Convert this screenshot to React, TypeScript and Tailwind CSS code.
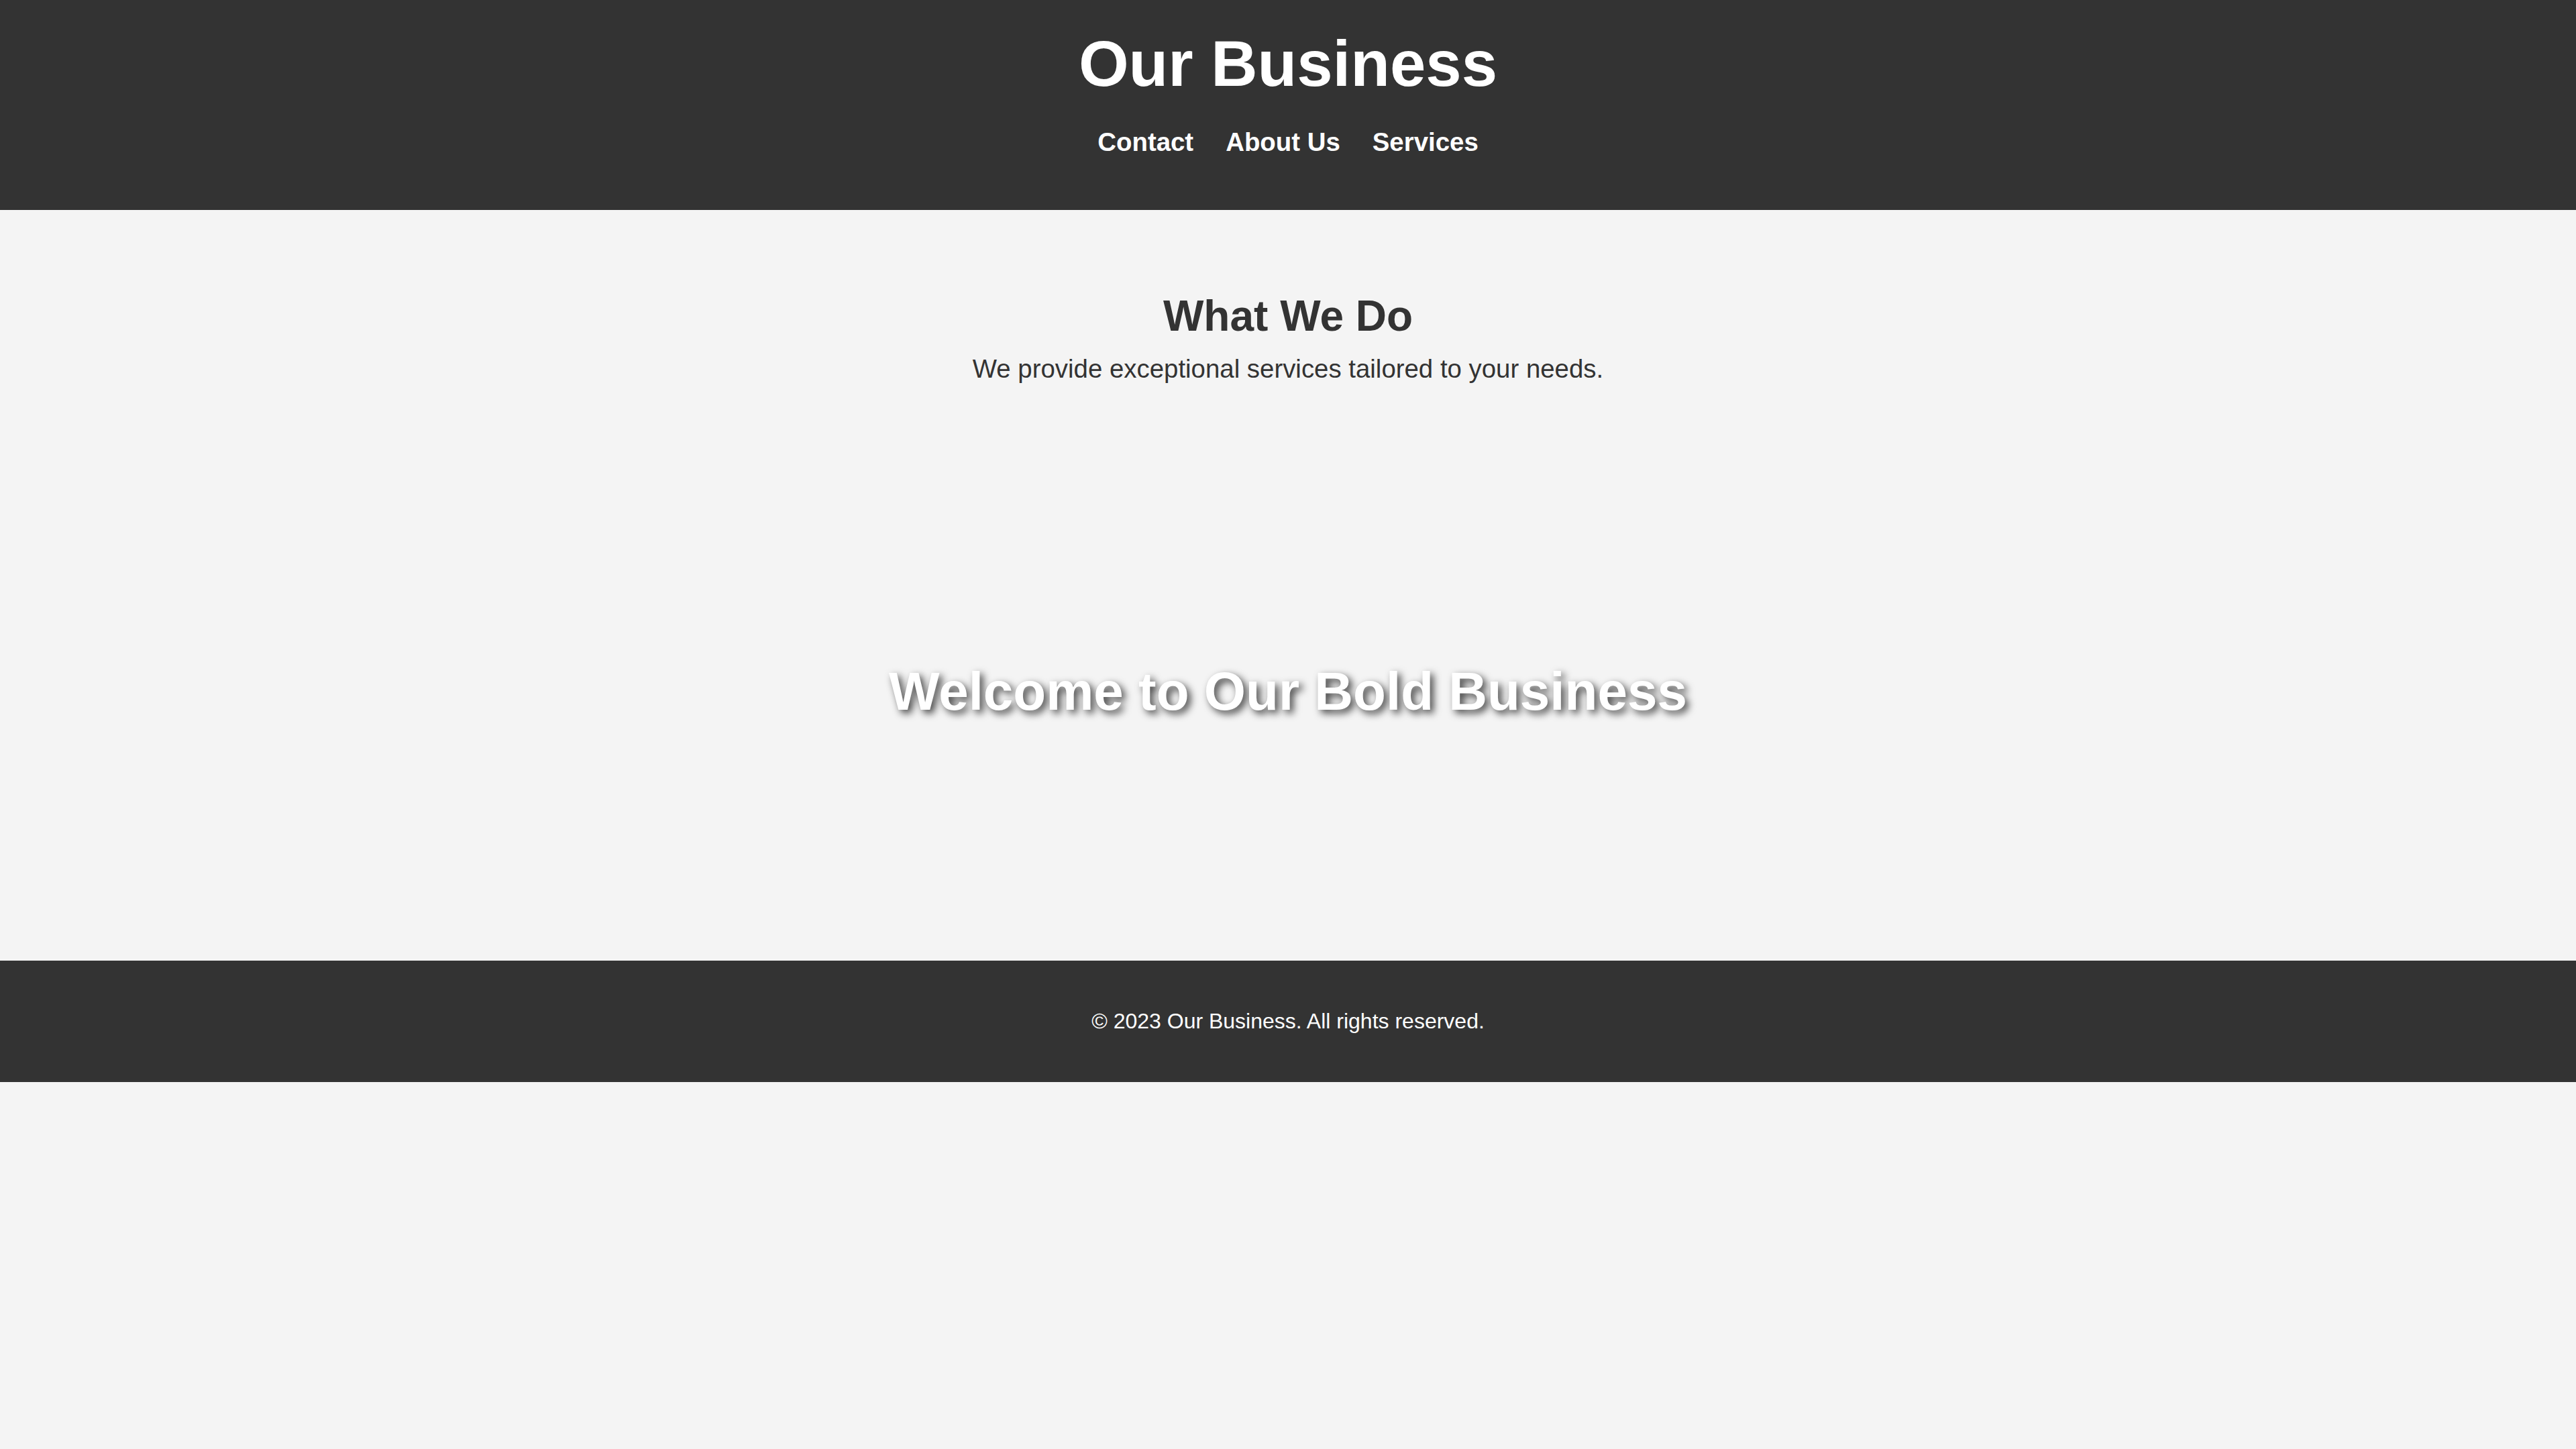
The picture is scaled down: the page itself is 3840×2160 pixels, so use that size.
export default function App() {
  const links = ["Contact", "About Us", "Services"];

  return (
    <div className="min-h-screen bg-[#f4f4f4] font-['Liberation_Sans',Arial,sans-serif] text-[#333]">
      <header className="bg-[#333] text-white pt-[40px] h-[313px] text-center">
        <h1 className="text-[96px] leading-[110px] font-bold">Our Business</h1>
        <nav className="mt-[40px]">
          <ul className="flex justify-center gap-[48px]">
            {links.map((link) => (
              <li key={link}>
                <a href="#" className="text-[38.4px] leading-[44px] font-bold text-white">
                  {link}
                </a>
              </li>
            ))}
          </ul>
        </nav>
      </header>

      <section className="pt-[121px] pb-[57px] text-center">
        <h2 className="text-[64px] leading-[74px] font-bold">What We Do</h2>
        <p className="mt-[20px] text-[38.4px] leading-[44px]">
          We provide exceptional services tailored to your needs.
        </p>
      </section>

      <section className="h-[803px] flex items-center justify-center">
        <h2 className="text-[80px] leading-[92px] font-bold text-white [text-shadow:5px_5px_12px_rgba(0,0,0,0.75)]">
          Welcome to Our Bold Business
        </h2>
      </section>

      <footer className="h-[181px] bg-[#333] text-white flex items-center justify-center">
        <p className="text-[32px] leading-[37px]">© 2023 Our Business. All rights reserved.</p>
      </footer>
    </div>
  );
}
